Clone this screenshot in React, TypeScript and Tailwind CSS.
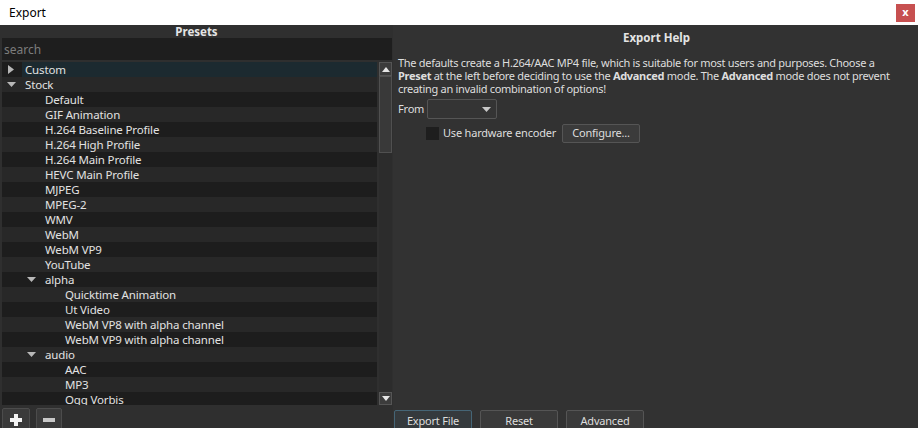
import React from 'react';

interface Row {
  label: string;
  level: number;
  arrow?: 'right' | 'down';
  selected?: boolean;
}

const rows: Row[] = [
  { label: 'Custom', level: 0, arrow: 'right', selected: true },
  { label: 'Stock', level: 0, arrow: 'down' },
  { label: 'Default', level: 1 },
  { label: 'GIF Animation', level: 1 },
  { label: 'H.264 Baseline Profile', level: 1 },
  { label: 'H.264 High Profile', level: 1 },
  { label: 'H.264 Main Profile', level: 1 },
  { label: 'HEVC Main Profile', level: 1 },
  { label: 'MJPEG', level: 1 },
  { label: 'MPEG-2', level: 1 },
  { label: 'WMV', level: 1 },
  { label: 'WebM', level: 1 },
  { label: 'WebM VP9', level: 1 },
  { label: 'YouTube', level: 1 },
  { label: 'alpha', level: 1, arrow: 'down' },
  { label: 'Quicktime Animation', level: 2 },
  { label: 'Ut Video', level: 2 },
  { label: 'WebM VP8 with alpha channel', level: 2 },
  { label: 'WebM VP9 with alpha channel', level: 2 },
  { label: 'audio', level: 1, arrow: 'down' },
  { label: 'AAC', level: 2 },
  { label: 'MP3', level: 2 },
  { label: 'Ogg Vorbis', level: 2 },
];

const indent = ['w-0', 'w-[20px]', 'w-[40px]'];

const font = { fontFamily: '"Noto Sans", "Open Sans", sans-serif' };

function Arrow({ dir }: { dir?: 'right' | 'down' }) {
  if (dir === 'right')
    return (
      <svg width="7" height="9" viewBox="0 0 7 9" className="ml-[6px]">
        <polygon points="0,0 6,4.5 0,9" fill="#b8b8b8" />
      </svg>
    );
  if (dir === 'down')
    return (
      <svg width="10" height="6" viewBox="0 0 10 6" className="ml-[5px]">
        <polygon points="0,0 9,0 4.5,5" fill="#b8b8b8" />
      </svg>
    );
  return null;
}

function TreeRow({ row, index }: { row: Row; index: number }) {
  const bg = index % 2 === 1 ? 'bg-[#282828]' : 'bg-[#1d1d1d]';
  return (
    <div className={`flex h-[15px] shrink-0 items-center ${bg}`}>
      <div className={`${indent[row.level]} shrink-0`} />
      <div className="flex h-full w-[20px] shrink-0 items-center">
        <Arrow dir={row.arrow} />
      </div>
      <div className={`flex h-full flex-1 items-center pl-[3px] ${row.selected ? 'bg-[#1c2a30]' : ''}`}>
        <span className="whitespace-nowrap text-[11.5px] leading-[15px] tracking-[-0.15px] text-[#e2e2e2]">{row.label}</span>
      </div>
    </div>
  );
}

export default function App() {
  return (
    <div className="flex h-[428px] w-[918px] flex-col overflow-hidden bg-[#323232]" style={font}>
      {/* title bar */}
      <div className="flex h-[25px] shrink-0 items-center justify-between bg-white pl-[9px] pr-[3px]">
        <span className="text-[12px] text-black">Export</span>
        <div className="flex h-[18px] w-[19px] items-center justify-center bg-[#c75050] pb-[2px] text-[11px] font-bold leading-none text-white">
          x
        </div>
      </div>

      <div className="flex h-[407px] shrink-0">
        {/* presets */}
        <div className="flex w-[393px] shrink-0 flex-col bg-[#2f2f2f]">
          <div className="flex h-[13px] items-center justify-center text-[11.5px] font-bold leading-none text-[#e4e4e4]">
            Presets
          </div>
          <div className="ml-[2px] mr-[1px] flex h-[22px] items-center bg-[#1e1e1e] pl-[2px] pt-[1px] text-[12px] text-[#7c7c7c]">
            search
          </div>
          <div className="mt-[2px] flex h-[343px] pl-[2px]">
            <div className="flex flex-1 flex-col overflow-hidden">
              {rows.map((r, i) => (
                <TreeRow key={r.label + i} row={r} index={i} />
              ))}
            </div>
            <div className="ml-[2px] mr-[1px] flex w-[13px] flex-col bg-[#2c2c2c]">
              <div className="flex h-[14px] items-center justify-center border border-[#555] bg-[#3c3c3c]">
                <svg width="8" height="5" viewBox="0 0 8 5">
                  <polygon points="0,5 8,5 4,0" fill="#e6e6e6" />
                </svg>
              </div>
              <div className="h-[77px] border border-[#505050] bg-[#393939]" />
              <div className="flex-1" />
              <div className="flex h-[13px] items-center justify-center border border-[#555] bg-[#3c3c3c]">
                <svg width="8" height="5" viewBox="0 0 8 5">
                  <polygon points="0,0 8,0 4,5" fill="#e6e6e6" />
                </svg>
              </div>
            </div>
          </div>
          <div className="mt-[3px] flex gap-[6px] pl-[2px]">
            <div className="flex h-[24px] w-[28px] items-center justify-center rounded-[2px] border border-[#4c4c4c] bg-[#3a3a3a]">
              <svg width="12" height="12" viewBox="0 0 12 12">
                <rect x="4" y="0" width="4" height="12" fill="#f2f2f2" />
                <rect x="0" y="4" width="12" height="4" fill="#f2f2f2" />
              </svg>
            </div>
            <div className="flex h-[24px] w-[26px] items-center justify-center rounded-[2px] border border-[#4c4c4c] bg-[#3a3a3a]">
              <svg width="12" height="4" viewBox="0 0 12 4">
                <rect x="0" y="0" width="12" height="4" fill="#c8c8c8" />
              </svg>
            </div>
          </div>
        </div>

        {/* help */}
        <div className="flex flex-1 flex-col pl-[5px] text-[11px] tracking-[-0.2px] text-[#dedede]">
          <div className="pr-[3px] pt-[6px] text-center text-[11.5px] font-bold leading-[14px] tracking-normal text-[#e4e4e4]">
            Export Help
          </div>
          <div className="mt-[11px] flex flex-col whitespace-nowrap leading-[13px] tracking-[-0.3px]">
            <span>The defaults create a H.264/AAC MP4 file, which is suitable for most users and purposes. Choose a</span>
            <span>
              <b>Preset</b> at the left before deciding to use the <b>Advanced</b> mode. The <b>Advanced</b> mode does not
              prevent
            </span>
            <span>creating an invalid combination of options!</span>
          </div>
          <div className="mt-[4px] flex h-[20px] items-center">
            <span className="w-[29px]">From</span>
            <div className="flex h-[20px] w-[70px] items-center justify-end rounded-[2px] border border-[#555] bg-[#343434] pr-[5px]">
              <svg width="9" height="5" viewBox="0 0 9 5">
                <polygon points="0,0 9,0 4.5,5" fill="#c8c8c8" />
              </svg>
            </div>
          </div>
          <div className="mt-[5px] flex h-[19px] items-center">
            <div className="ml-[28px] h-[13px] w-[13px] shrink-0 bg-[#1e1e1e]" />
            <span className="ml-[4px] w-[110px] shrink-0 whitespace-nowrap">Use hardware encoder</span>
            <div className="ml-[9px] flex h-[19px] w-[78px] items-center justify-center rounded-[2px] border border-[#555] bg-[#3b3b3b]">
              Configure...
            </div>
          </div>
          <div className="flex-1" />
          <div className="-ml-[4px] flex gap-[8px]">
            <div className="flex h-[22px] w-[78px] items-start justify-center rounded-[2px] border border-[#456576] bg-[#353a3d] pt-[1px] leading-[17px]">
              Export File
            </div>
            <div className="flex h-[22px] w-[78px] items-start justify-center rounded-[2px] border border-[#555] bg-[#3a3a3a] pt-[1px] leading-[17px]">
              Reset
            </div>
            <div className="flex h-[22px] w-[78px] items-start justify-center rounded-[2px] border border-[#555] bg-[#3a3a3a] pt-[1px] leading-[17px]">
              Advanced
            </div>
          </div>
        </div>
      </div>
    </div>
  );
}
